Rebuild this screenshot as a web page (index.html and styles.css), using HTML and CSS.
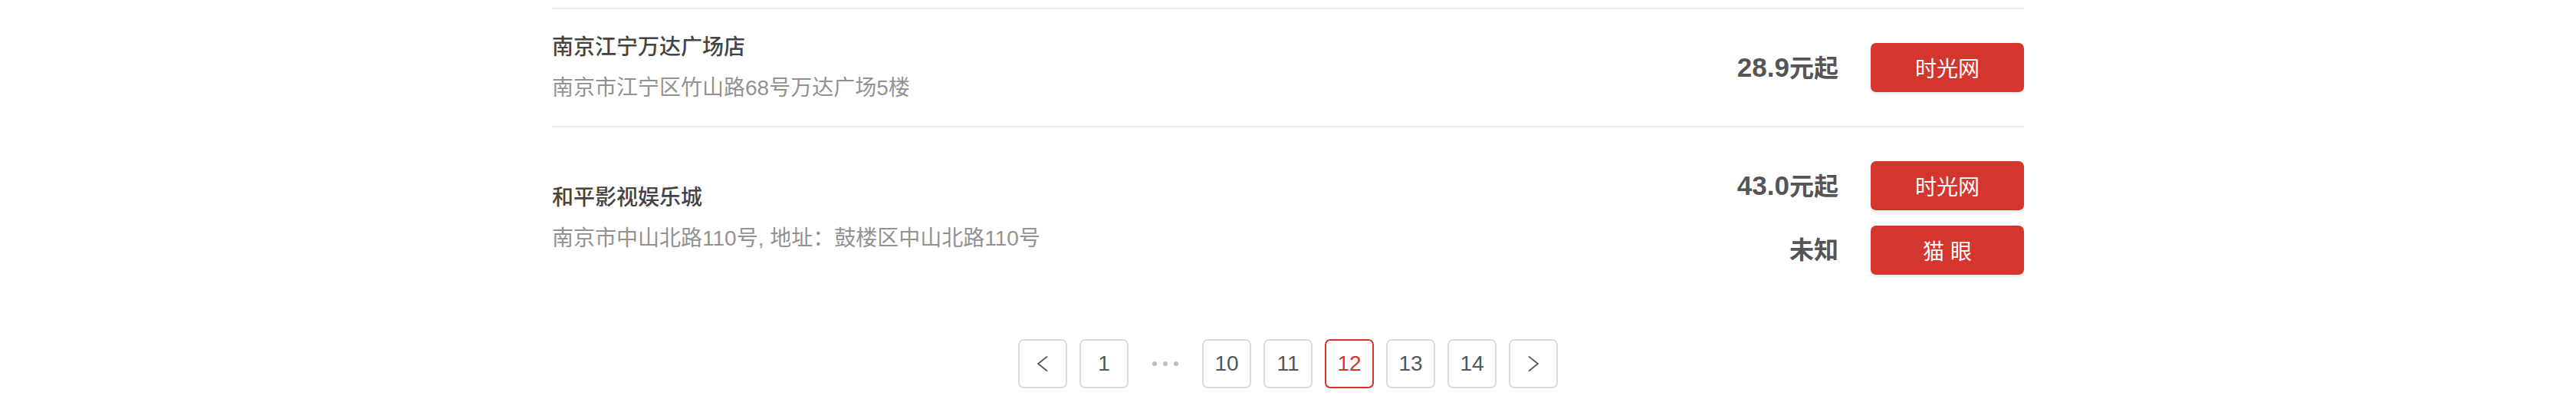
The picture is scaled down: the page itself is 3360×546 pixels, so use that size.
FILE: index.html
```html
<!DOCTYPE html>
<html lang="zh-CN">
<head>
<meta charset="utf-8">
<title>影院列表</title>
<link rel="stylesheet" href="styles.css">
</head>
<body>
<div class="page">
  <ul class="cinema-list">
    <li class="cinema">
      <div class="info">
        <div class="name">南京江宁万达广场店</div>
        <div class="addr">南京市江宁区竹山路68号万达广场5楼</div>
      </div>
      <div class="offers">
        <div class="offer">
          <span class="price"><span class="num">28.9</span>元起</span>
          <a class="buy" href="#">时光网</a>
        </div>
      </div>
    </li>
    <li class="cinema">
      <div class="info">
        <div class="name">和平影视娱乐城</div>
        <div class="addr">南京市中山北路110号, 地址：鼓楼区中山北路110号</div>
      </div>
      <div class="offers">
        <div class="offer">
          <span class="price"><span class="num">43.0</span>元起</span>
          <a class="buy" href="#">时光网</a>
        </div>
        <div class="offer">
          <span class="price">未知</span>
          <a class="buy" href="#">猫 眼</a>
        </div>
      </div>
    </li>
  </ul>
  <nav class="pager">
    <a class="pg" href="#"><svg class="chev" width="16" height="22" viewBox="0 0 16 22"><polyline points="14,1.5 2,11 14,20.5" fill="none" stroke="#595959" stroke-width="1.8"/></svg></a>
    <a class="pg" href="#">1</a>
    <span class="pg dots"><i></i><i></i><i></i></span>
    <a class="pg" href="#">10</a>
    <a class="pg" href="#">11</a>
    <a class="pg active" href="#">12</a>
    <a class="pg" href="#">13</a>
    <a class="pg" href="#">14</a>
    <a class="pg" href="#"><svg class="chev" width="16" height="22" viewBox="0 0 16 22"><polyline points="2,1.5 14,11 2,20.5" fill="none" stroke="#595959" stroke-width="1.8"/></svg></a>
  </nav>
</div>
</body>
</html>
```

FILE: styles.css
```css
* { box-sizing: border-box; }
html, body { margin: 0; padding: 0; background: #fff; }
body {
  font-family: "Liberation Sans", "Noto Sans CJK SC", sans-serif;
  color: #555;
}
.page {
  width: 1920px;
  margin: 0 auto;
  padding-top: 10px;
}
.cinema-list {
  list-style: none;
  margin: 0;
  padding: 0;
}
.cinema {
  display: flex;
  align-items: center;
  justify-content: space-between;
  border-top: 2px solid #ebebeb;
}
.info {
  display: flex;
  flex-direction: column;
  gap: 21px;
}
.name {
  font-size: 28px;
  line-height: 32px;
  font-weight: 500;
  color: #444;
}
.addr {
  font-size: 28px;
  line-height: 32px;
  color: #929292;
}
.offers {
  display: flex;
  flex-direction: column;
  gap: 20px;
  padding: 44px 0;
}
.offer {
  display: flex;
  align-items: center;
  justify-content: flex-end;
  gap: 42px;
}
.price {
  font-size: 32px;
  font-weight: 700;
  color: #555;
  line-height: 40px;
}
.price .num {
  font-size: 35px;
}
.buy {
  display: flex;
  align-items: center;
  justify-content: center;
  width: 200px;
  height: 64px;
  border-radius: 7px;
  background: #d4352c;
  color: #fff;
  font-size: 28px;
  text-decoration: none;
  box-shadow: 0 3px 3px rgba(0, 0, 0, 0.07);
}
.pager {
  display: flex;
  justify-content: center;
  gap: 16px;
  margin-top: 40px;
}
.pg {
  display: flex;
  align-items: center;
  justify-content: center;
  width: 64px;
  height: 64px;
  border: 2px solid #dadada;
  border-radius: 7px;
  font-size: 28px;
  color: #555;
  text-decoration: none;
}
.pg.active {
  border-color: #d4352c;
  color: #d4352c;
}
.pg.dots {
  border: none;
  gap: 8px;
}
.dots i {
  display: block;
  width: 6px;
  height: 6px;
  border-radius: 50%;
  background: #bdbdbd;
}
.chev { display: block; }
```
